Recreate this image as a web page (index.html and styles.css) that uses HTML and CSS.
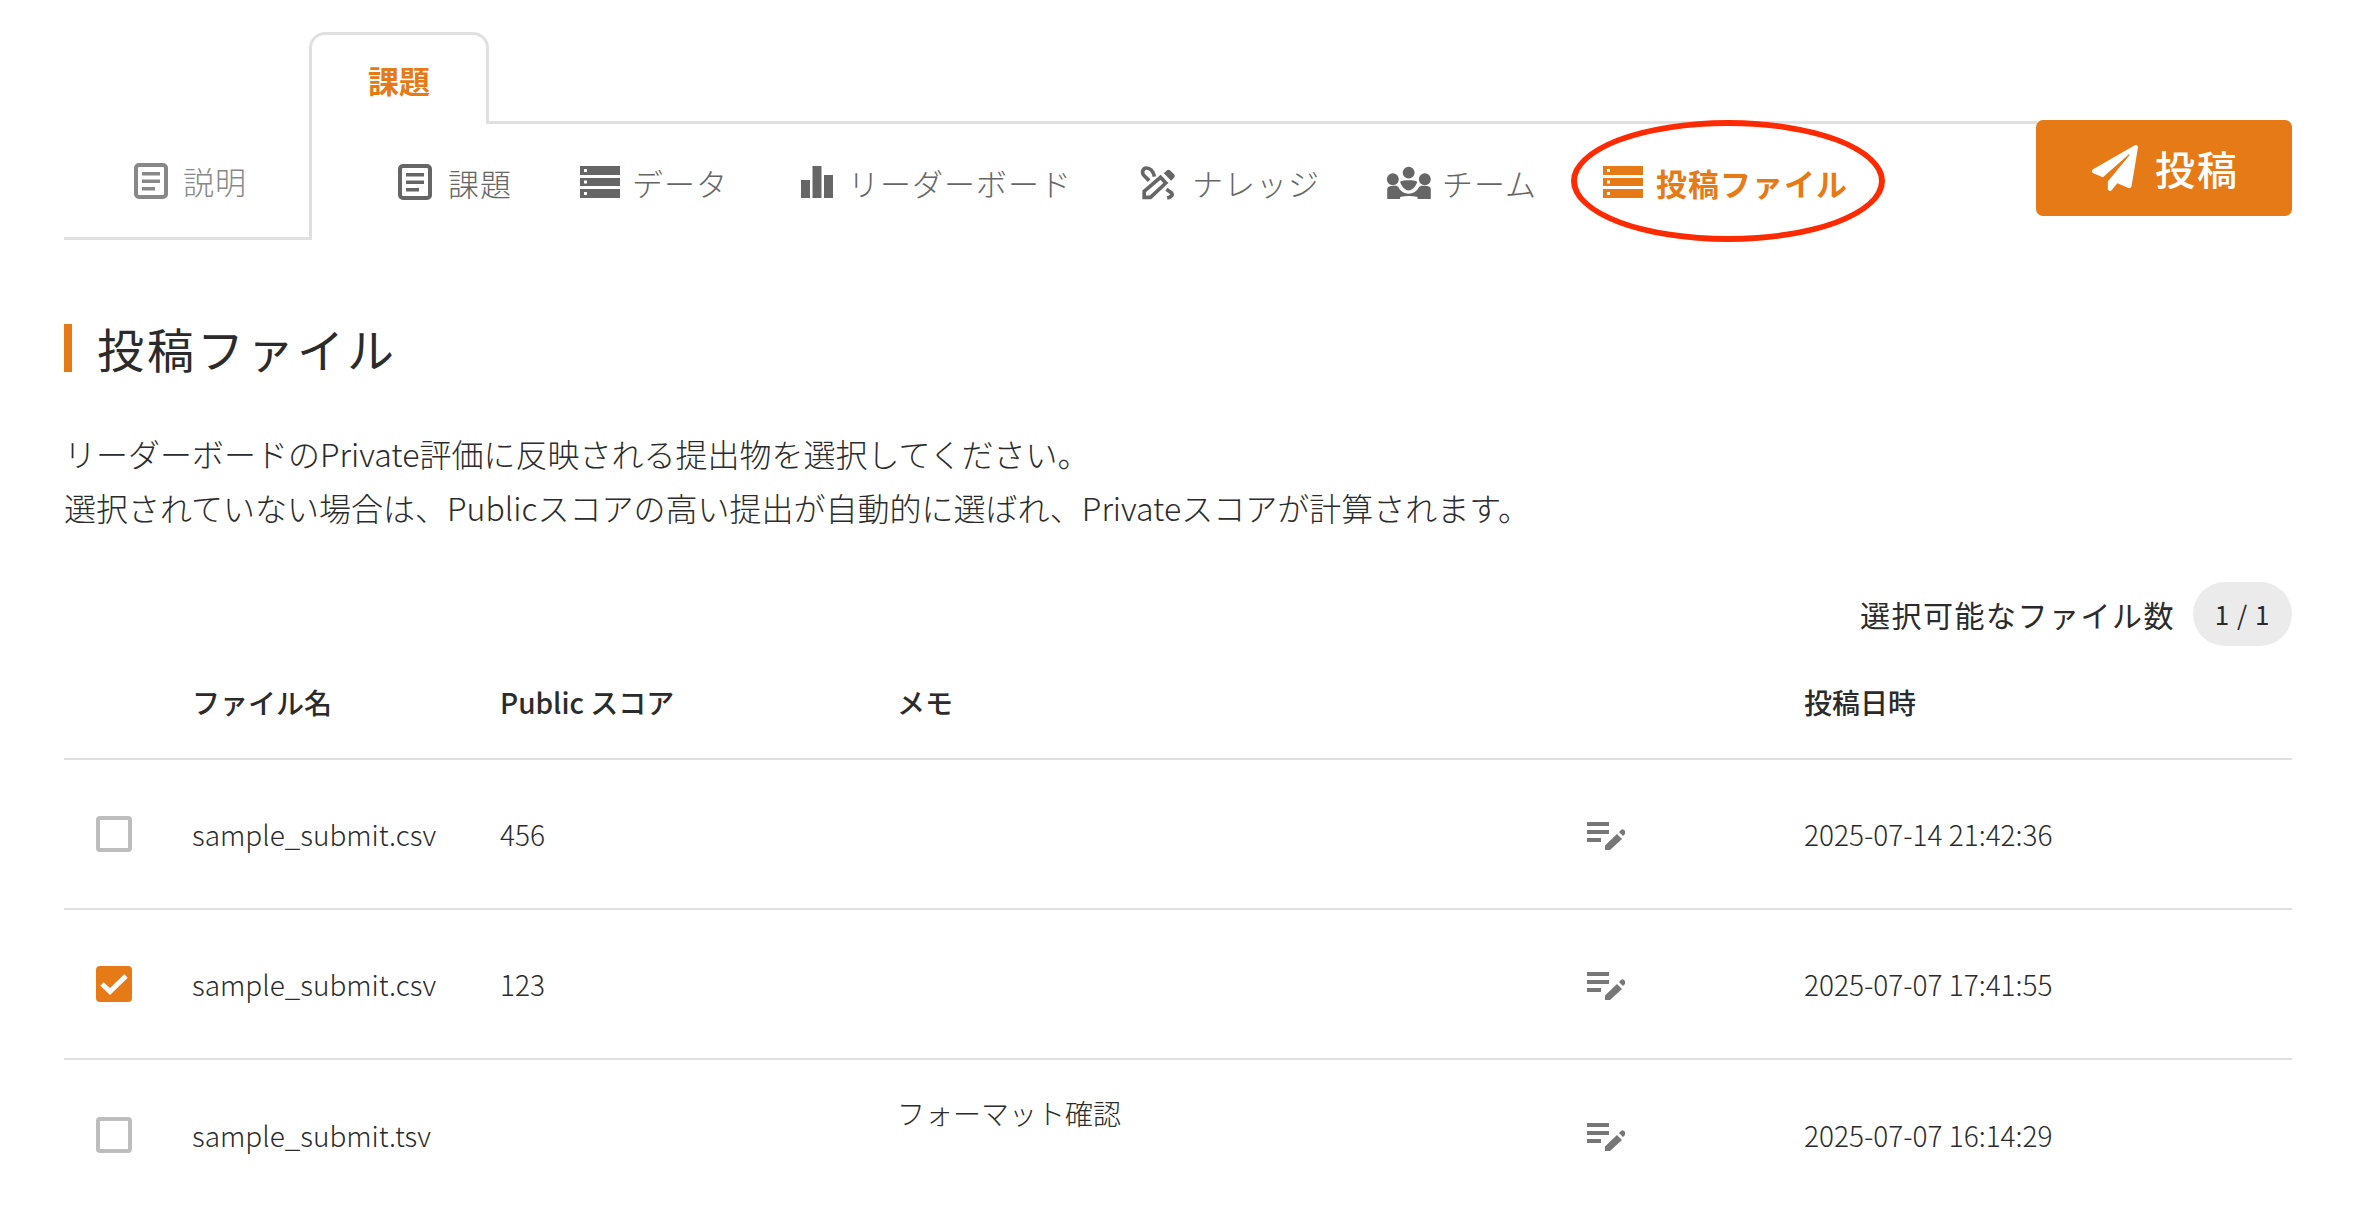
FILE: index.html
```html
<!DOCTYPE html>
<html lang="ja">
<head>
    <meta charset="UTF-8">
    <title>投稿ファイル</title>
    <link rel="stylesheet" href="styles.css">
</head>
<body>

    <!-- タブ -->
    <header class="tabs">
        <div class="tabs-top">
            <div class="tabs-spacer"></div>
            <div class="tab-active">課題</div>
            <div class="tabs-line"></div>
        </div>
        <div class="tabs-bottom">
            <a class="tab-side">
                <svg class="icon icon-doc" viewBox="0 0 34 36"><rect x="2" y="2" width="30" height="32" rx="3" fill="none" stroke="currentColor" stroke-width="4"/><path d="M8 9h18v3.5H8zM8 16.5h18V20H8zM8 24h13v3.5H8z" fill="currentColor"/></svg>
                説明
            </a>
            <nav class="sub-nav">
                <a class="sub-item item-task">
                    <svg class="icon icon-doc" viewBox="0 0 34 36"><rect x="2" y="2" width="30" height="32" rx="3" fill="none" stroke="currentColor" stroke-width="4"/><path d="M8 9h18v3.5H8zM8 16.5h18V20H8zM8 24h13v3.5H8z" fill="currentColor"/></svg>
                    課題
                </a>
                <a class="sub-item item-data">
                    <svg class="icon icon-data" viewBox="0 0 40 32"><path fill-rule="evenodd" d="M0 0h40v9H0zM4 3v3h3V3zM0 12h40v8H0zM4 14.500v3h3v-3zM0 23h40v9H0zM4 26v3h3v-3z" fill="currentColor"/></svg>
                    データ
                </a>
                <a class="sub-item item-board">
                    <svg class="icon icon-board" viewBox="0 0 32 32"><path d="M0 14h9v18H0zM11.500 0h9v32h-9zM23 9h9v23h-9z" fill="currentColor"/></svg>
                    リーダーボード
                </a>
                <a class="sub-item item-know">
                    <svg class="icon icon-know" viewBox="35 25 110 105"><path d="M47 122V104L96 62l16 17-46 43z" fill="none" stroke="currentColor" stroke-width="11"/><path d="M106 50l8-8c4-4 8-4 12 0l10 10c4 4 4 8 0 12l-8 8z" fill="currentColor"/><path d="M78 60C74 44 66 34 54 34 42 34 38 50 48 58L62 72M114 98l14 10c6 6 2 14-12 16" fill="none" stroke="currentColor" stroke-width="11"/></svg>
                    ナレッジ
                </a>
                <a class="sub-item item-team">
                    <svg class="icon icon-team" viewBox="30 30 138 100"><circle cx="98" cy="50" r="18" fill="currentColor"/><circle cx="50" cy="70" r="18" fill="currentColor"/><circle cx="147" cy="70" r="18" fill="currentColor"/><path d="M72 78c13-6 40-6 52 0-6 20-19 26-26 26-8 0-20-6-26-26z" fill="currentColor"/><path d="M33 130v-30c0-8 12-10 22-10 7 0 11 2 13 6 6 12 18 18 30 18s24-6 30-18c2-4 8-6 14-6 13 0 23 2 23 10v30h-40v-6q-27-6-53 0v6z" fill="currentColor"/></svg>
                    チーム
                </a>
                <a class="sub-item current">
                    <svg class="icon icon-data" viewBox="0 0 40 32"><path fill-rule="evenodd" d="M0 0h40v9H0zM4 3v3h3V3zM0 12h40v8H0zM4 14.500v3h3v-3zM0 23h40v9H0zM4 26v3h3v-3z" fill="currentColor"/></svg>
                    投稿ファイル
                    <!-- 赤丸の注釈 -->
                    <span class="red-circle"></span>
                </a>
            </nav>
            <button class="submit-btn">
                <svg class="icon-plane" viewBox="0 0 512 512"><path d="M476 3.200L12.500 270.600c-18.100 10.400-15.800 35.600 2.200 43.200L121 358.400l287.300-253.200c5.500-4.900 13.300 2.600 8.600 8.300L176 407v80.500c0 23.600 28.500 32.900 42.500 15.800L282 426l124.600 52.200c14.200 6 30.400-2.900 33-18.200l72-432C515 7.800 493.300-6.800 476 3.200z" fill="currentColor"/></svg>
                投稿
            </button>
        </div>
    </header>

    <main class="content">
        <h2 class="section-title">投稿ファイル</h2>
        <p class="lead">リーダーボードのPrivate評価に反映される提出物を選択してください。<br>選択されていない場合は、Publicスコアの高い提出が自動的に選ばれ、Privateスコアが計算されます。</p>

        <div class="file-count">
            <span>選択可能なファイル数</span>
            <span class="count-pill">1 / 1</span>
        </div>

        <table class="file-table">
            <thead>
                <tr>
                    <th class="col-check"></th>
                    <th class="col-name">ファイル名</th>
                    <th class="col-score">Public スコア</th>
                    <th class="col-memo">メモ</th>
                    <th class="col-edit"></th>
                    <th>投稿日時</th>
                </tr>
            </thead>
            <tbody>
                <tr>
                    <td><span class="check"></span></td>
                    <td>sample_submit.csv</td>
                    <td>456</td>
                    <td></td>
                    <td><svg class="icon-edit" viewBox="0 0 38 28"><path d="M0 0h22v4H0zM0 8h22v4H0zM0 16h14v4H0zM18 23.500 30 12l5 5-12 11h-5zM32 10l2-2c1-1 2-1 3 0l1 1c1 1 1 2 0 3l-2 2z" fill="currentColor"/></svg></td>
                    <td>2025-07-14 21:42:36</td>
                </tr>
                <tr>
                    <td>
                        <span class="check checked">
                            <svg viewBox="0 0 36 36"><path d="M6 18l8 7.500L30 10" fill="none" stroke="#fff" stroke-width="5"/></svg>
                        </span>
                    </td>
                    <td>sample_submit.csv</td>
                    <td>123</td>
                    <td></td>
                    <td><svg class="icon-edit" viewBox="0 0 38 28"><path d="M0 0h22v4H0zM0 8h22v4H0zM0 16h14v4H0zM18 23.500 30 12l5 5-12 11h-5zM32 10l2-2c1-1 2-1 3 0l1 1c1 1 1 2 0 3l-2 2z" fill="currentColor"/></svg></td>
                    <td>2025-07-07 17:41:55</td>
                </tr>
                <tr>
                    <td><span class="check"></span></td>
                    <td>sample_submit.tsv</td>
                    <td></td>
                    <td class="memo-top">フォーマット確認</td>
                    <td><svg class="icon-edit" viewBox="0 0 38 28"><path d="M0 0h22v4H0zM0 8h22v4H0zM0 16h14v4H0zM18 23.500 30 12l5 5-12 11h-5zM32 10l2-2c1-1 2-1 3 0l1 1c1 1 1 2 0 3l-2 2z" fill="currentColor"/></svg></td>
                    <td>2025-07-07 16:14:29</td>
                </tr>
            </tbody>
        </table>
    </main>

</body>
</html>
```

FILE: styles.css
```css
html, body {
    height: 1209px;
    overflow: hidden;
}
body {
    margin: 0;
    padding: 0 62px 0 64px;
    background-color: #fff;
    color: #2b2b2b;
    font-family: "Noto Sans CJK JP", "Noto Sans", sans-serif;
    font-weight: 300;
}
/* タブ */
.tabs {
    padding-top: 32px;
}
.tabs-top {
    display: flex;
    height: 92px;
}
.tabs-spacer {
    width: 245px;
}
.tab-active {
    width: 180px;
    box-sizing: border-box;
    border: 3px solid #e0e0e0;
    border-bottom: none;
    border-radius: 16px 16px 0 0;
    padding-top: 23px;
    text-align: center;
    color: #e67a17;
    font-size: 31px;
    font-weight: 700;
    line-height: 44px;
}
.tabs-line {
    flex: 1;
    border-bottom: 3px solid #e0e0e0;
    margin-right: 255px;
}
.tabs-bottom {
    display: flex;
    height: 116px;
}
.icon {
    flex: none;
    fill: currentColor;
}
.icon-doc {
    width: 34px;
    height: 36px;
}
.icon-data {
    width: 40px;
    height: 32px;
}
.icon-board {
    width: 32px;
    height: 32px;
}
.icon-know {
    width: 37px;
    height: 35px;
}
.icon-team {
    width: 46px;
    height: 33px;
}
.tab-side {
    width: 245px;
    box-sizing: border-box;
    border-bottom: 3px solid #e0e0e0;
    padding: 0 0 0 70px;
    height: 116px;
    display: flex;
    align-items: center;
    gap: 15px;
    color: #888;
    font-size: 31px;
    letter-spacing: 1px;
}
.sub-nav {
    flex: 1;
    display: flex;
    align-items: center;
    gap: 66px;
    height: 116px;
    padding-left: 86px;
    border-left: 3px solid #e0e0e0;
}
.sub-item {
    position: relative;
    display: flex;
    align-items: center;
    gap: 15px;
    color: #666;
    font-size: 31px;
    letter-spacing: 1px;
    white-space: nowrap;
}
.item-task {
    gap: 16px;
}
.item-data {
    margin-left: 2px;
    gap: 12px;
}
.item-board {
    margin-left: 7px;
    gap: 15px;
}
.item-know {
    margin-left: 2px;
}
.item-team {
    gap: 10px;
}
.sub-item.current {
    color: #e67a17;
    font-weight: 700;
    gap: 13px;
}
.red-circle {
    position: absolute;
    left: -32px;
    top: -40px;
    width: 314px;
    height: 122px;
    box-sizing: border-box;
    border: 6px solid #ff2a00;
    border-radius: 50%;
}
.submit-btn {
    display: flex;
    align-items: center;
    justify-content: center;
    gap: 17px;
    width: 256px;
    height: 96px;
    margin-top: -4px;
    padding: 0 0 0 3px;
    border: none;
    border-radius: 7px;
    background-color: #e67a17;
    color: #fff;
    font-family: inherit;
    font-size: 40px;
    font-weight: 500;
    letter-spacing: 2px;
}
.icon-plane {
    width: 46px;
    height: 46px;
}
/* 本文 */
.section-title {
    margin: 84px 0 0;
    padding-left: 25px;
    border-left: 8px solid #e67a17;
    height: 48px;
    line-height: 47px;
    font-size: 47px;
    font-weight: 400;
    letter-spacing: 3px;
}
.lead {
    margin: 54px 0 0;
    font-size: 32px;
    line-height: 54px;
}
.file-count {
    display: flex;
    justify-content: flex-end;
    align-items: center;
    gap: 18px;
    margin-top: 48px;
    font-size: 30px;
    font-weight: 400;
    letter-spacing: 1.500px;
}
.count-pill {
    width: 99px;
    height: 64px;
    line-height: 64px;
    border-radius: 32px;
    background-color: #ebebeb;
    text-align: center;
    font-size: 26px;
    font-weight: 400;
    letter-spacing: 1px;
}
/* ファイル一覧 */
.file-table {
    width: 100%;
    border-collapse: collapse;
    table-layout: fixed;
}
.file-table th {
    height: 112px;
    padding: 0;
    border-bottom: 2px solid #e0e0e0;
    text-align: left;
    font-size: 28px;
    font-weight: 500;
}
.file-table td {
    height: 150px;
    box-sizing: border-box;
    padding: 0;
    border-bottom: 2px solid #e0e0e0;
    font-size: 28px;
    vertical-align: middle;
}
.file-table tr:last-child td {
    border-bottom: none;
}
.file-table td.memo-top {
    vertical-align: top;
    padding-top: 32px;
    line-height: 42px;
}
.col-check {
    width: 128px;
}
.col-name {
    width: 308px;
}
.col-score {
    width: 397px;
}
.col-memo {
    width: 690px;
}
.col-edit {
    width: 217px;
}
.icon-edit {
    display: block;
    width: 38px;
    height: 28px;
    color: #777;
    position: relative;
    top: 2px;
}
.check {
    display: block;
    width: 36px;
    height: 36px;
    box-sizing: border-box;
    margin-left: 32px;
    border: 4px solid #bdbdbd;
    border-radius: 4px;
}
.check.checked {
    border: none;
    background-color: #e67a17;
}
.check svg {
    display: block;
}
```
